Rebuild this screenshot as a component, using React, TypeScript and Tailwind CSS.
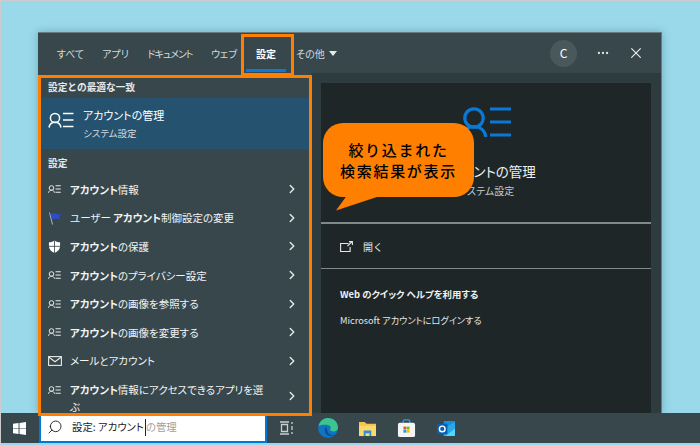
import { ReactNode } from 'react';
import { ChevronRight, MoreHorizontal, X, Search } from 'lucide-react';

const font = { fontFamily: '"Noto Sans CJK JP", "Noto Sans", sans-serif' };

function AccountIcon({ className, sw = 1.6 }: { className: string; sw?: number }) {
  return (
    <svg viewBox="0 0 26 16" fill="none" stroke="currentColor" strokeWidth={sw} className={className}>
      <circle cx="7" cy="6" r="4.600" />
      <path d="M1 15.500c.6-3.400 3-5.200 6-5.200s5.400 1.800 6 5.200" />
      <path d="M15 1.500h10.500M15 8h10.500M15 14.500h10.500" />
    </svg>
  );
}

function FlagIcon() {
  return (
    <svg viewBox="0 0 14 14" className="w-[14px] h-[14px]">
      <path d="M1.500 1.500 4.500 13.500" stroke="#aab4b8" strokeWidth="1" />
      <path d="M2 1.500c2 1.500 3 .5 5 1s3 1.500 6.500 .5L11 5.500l1.500 2c-3 .8-4.500-1-8.500 .8z" fill="#2f4bd0" />
    </svg>
  );
}

function ShieldIcon() {
  return (
    <svg viewBox="0 0 14 14" className="w-[13px] h-[13px]">
      <path d="M1 2.500C3.500 2.500 5.500 1.500 7 .5c1.500 1 3.500 2 6 2v4c0 3.500-2.500 6-6 7.500-3.500-1.500-6-4-6-7.500z" fill="#fff" />
      <path d="M7 .5v13.500M1 6.800h12" stroke="#38474c" strokeWidth="0.9" />
    </svg>
  );
}

function MailIcon() {
  return (
    <svg viewBox="0 0 14 10" fill="none" stroke="#e8eaea" strokeWidth="1.100" className="w-[14px] h-[10px]">
      <rect x="0.600" y="0.600" width="12.800" height="8.800" />
      <path d="M1 1.200 7 5.800l6-4.600" />
    </svg>
  );
}

function Row({ icon, children, tall }: { icon: ReactNode; children: ReactNode; tall?: boolean }) {
  return (
    <div className={`flex pl-[7px] pr-[10px] shrink-0 ${tall ? 'h-[38px] pt-[6px] items-start' : 'h-[28.6px] items-center'}`}>
      <div className={`w-[22px] flex items-center ${tall ? 'h-[17px]' : ''}`}>{icon}</div>
      <div className={`flex-1 text-[10.5px] text-[#f2f4f4] leading-[17px] [font-feature-settings:'palt'] ${tall ? 'pr-[14px]' : ''}`}>
        {children}
      </div>
      <ChevronRight size={14} strokeWidth={2.4} className={`text-[#e8eaea] ${tall ? 'mt-[1px] translate-y-[7px]' : ''}`} />
    </div>
  );
}

const accountIcon = <AccountIcon sw={2} className="w-[13px] h-[8px] text-[#e8eaea]" />;

function Tab({ label, active, className }: { label: string; active?: boolean; className: string }) {
  return (
    <div className={`relative h-full flex items-center justify-center whitespace-nowrap text-[10px] [font-feature-settings:'palt'] ${active ? 'font-bold text-white' : 'text-[#d5d9da]'} ${className}`}>
      {label}
      {active && <div className="absolute left-[-10px] right-[-10px] bottom-[1px] h-[3px] bg-[#0a78d4]" />}
    </div>
  );
}

export default function App() {
  return (
    <div style={font} className="relative w-[700px] h-[445px] overflow-hidden bg-[#99d9ea] border-t border-l border-[#cccccc] flex flex-col">
      <div className="ml-[37px] mt-[31px] w-[624px] h-[381px] flex flex-col bg-[#38474c] border-t border-r border-[#6b7a7e] shadow-[0_0_8px_rgba(40,80,90,0.35)]">
        {/* tabs */}
        <div className="h-[40px] flex items-center shrink-0">
          <Tab label="すべて" className="ml-[20px] w-[25px]" />
          <Tab label="アプリ" className="ml-[21px] w-[23px]" />
          <Tab label="ドキュメント" className="ml-[21px] w-[44px] tracking-[-1px]" />
          <Tab label="ウェブ" className="ml-[21px] w-[22px]" />
          <Tab label="設定" active className="ml-[21px] w-[20px]" />
          <Tab label="その他" className="ml-[21px] w-[27px]" />
          <div className="ml-[5px] w-0 h-0 border-x-[4px] border-x-transparent border-t-[5px] border-t-[#e8eaea]" />
          <div className="ml-auto w-[27px] h-[27px] rounded-full bg-[#4a585c] text-white text-[12px] flex items-center justify-center">C</div>
          <MoreHorizontal size={14} className="ml-[19px] text-[#e0e3e3]" />
          <X size={14} strokeWidth={1.5} className="ml-[19px] mr-[18px] text-[#eceeee] scale-125" />
        </div>

        <div className="flex-1 flex min-h-0">
          {/* results list */}
          <div className="w-[273px] flex flex-col pl-[3px] pr-[2px] shrink-0">
            <div className="h-[25px] shrink-0 pl-[7px] pt-[6px] text-[9.7px] font-bold text-[#e6e9e9] leading-[16px]">設定との最適な一致</div>
            <div className="h-[51px] shrink-0 bg-[#25526f] flex items-start pl-[7px]">
              <AccountIcon sw={1.5} className="w-[26px] h-[16px] mt-[14px] text-white" />
              <div className="ml-[9px] [font-feature-settings:'palt']">
                <div className="mt-[8px] text-[11px] leading-[18px] text-white">アカウントの管理</div>
                <div className="mt-[1px] text-[9.5px] leading-[16px] text-[#d4dadd]">システム設定</div>
              </div>
            </div>
            <div className="h-[26px] shrink-0 pl-[7px] pt-[6px] text-[9.7px] font-bold text-[#e6e9e9] leading-[16px]">設定</div>
            <Row icon={accountIcon}><b>アカウント</b>情報</Row>
            <Row icon={<FlagIcon />}>ユーザー <b>アカウント</b>制御設定の変更</Row>
            <Row icon={<ShieldIcon />}><b>アカウント</b>の保護</Row>
            <Row icon={accountIcon}><b>アカウント</b>のプライバシー設定</Row>
            <Row icon={accountIcon}><b>アカウント</b>の画像を参照する</Row>
            <Row icon={accountIcon}><b>アカウント</b>の画像を変更する</Row>
            <Row icon={<MailIcon />}>メールとアカウント</Row>
            <Row tall icon={accountIcon}><b>アカウント</b>情報にアクセスできるアプリを選ぶ</Row>
          </div>

          {/* preview */}
          <div className="flex-1 bg-[#2e3b3f] pt-[10px] px-[10px]">
            <div className="h-full bg-[#1f2628] flex flex-col">
              <div className="h-[139px] flex flex-col items-center shrink-0">
                <AccountIcon className="w-[52px] h-[32px] mt-[23px] text-[#0a78d4]" />
                <div className="mt-[23px] text-[13.5px] leading-[20px] text-[#eef0f0] [font-feature-settings:'palt']">アカウントの管理</div>
                <div className="mt-[2px] text-[10px] leading-[16px] text-[#c6caca] [font-feature-settings:'palt']">システム設定</div>
              </div>
              <div className="h-[2px] bg-[#7f8a8b]" />
              <div className="h-[44px] flex items-center pl-[19px]">
                <svg viewBox="0 0 13 11" fill="none" stroke="#e4e6e6" strokeWidth="1.100" className="w-[13px] h-[11px]">
                  <path d="M8.500 2.500H.6v8h9.500V6M7.500 5l4.500-4.400M9 .6h3.400V4" />
                </svg>
                <span className="ml-[10px] text-[10px] text-[#e4e6e6]">開く</span>
              </div>
              <div className="h-[1px] bg-[#7f8a8b]" />
              <div className="pl-[19px] pt-[17px] text-[9.4px] leading-[16px] font-bold text-[#f0f2f2] [font-feature-settings:'palt']">Web のクイック ヘルプを利用する</div>
              <div className="pl-[19px] pt-[10px] text-[9.2px] leading-[17px] text-[#e4e6e6] [font-feature-settings:'palt']">Microsoft アカウントにログインする</div>
            </div>
          </div>
        </div>
      </div>

      {/* taskbar */}
      <div className="ml-[-1px] h-[30px] w-[700px] bg-[#37474b] flex items-center shrink-0">
        <svg viewBox="0 0 14 14" className="ml-[13px] w-[13px] h-[13px]">
          <path d="M0 2 6 1.100V6.600H0zM7 1 14 0V6.600H7zM0 7.400H6V12.900L0 12zM7 7.400H14V14L7 13z" fill="#fff" />
        </svg>
        <div className="ml-[13px] w-[228px] h-[30px] bg-white border-2 border-[#0078d7] border-t-0 flex items-center">
          <Search size={16} strokeWidth={1.4} className="ml-[6px] -scale-x-100 text-[#222]" />
          <span className="ml-[9px] text-[10.4px] text-[#222] [font-feature-settings:'palt']">設定: アカウント</span>
          <span className="ml-[1px] w-px h-[17px] bg-[#222]" />
          <span className="text-[10.4px] text-[#a0a0a0] [font-feature-settings:'palt']">の管理</span>
        </div>
        <svg viewBox="0 0 13 14" fill="none" stroke="#c9cecf" strokeWidth="1.300" className="ml-[13px] w-[13px] h-[14px]">
          <path d="M0 1h9M0 13h9M1.500 3.500h6v7h-6zM12 1v2M12 5v4M12 11v2" />
        </svg>
        <svg viewBox="0 0 20 20" className="ml-[25px] w-[20px] h-[20px]">
          <circle cx="10" cy="10" r="10" fill="#1173c4" />
          <path d="M0.500 8C2 2.500 6 0 10 0c5.500 0 10 4 10 9.500 0 2.500-2 4-4.500 4-2 0-3.500-.8-3.500-2 1.500-1 1-4-2.500-4.500C6 6.500 3 7 .5 8z" fill="#3cc48d" />
          <path d="M8 9c-2 2-1.500 6.500 2 8.500 2 1 5 .5 7-1-3 1-5.500.5-7-2-1-2-1-3.500-2-5.500z" fill="#0c4f8f" />
        </svg>
        <svg viewBox="0 0 20 18" className="ml-[20px] w-[19px] h-[17px]">
          <path d="M1 2h6l2 2h10v13H1z" fill="#f3c44e" />
          <path d="M1 6h18v11H1z" fill="#fbd96b" />
          <path d="M6 11h8v6h-2v-3H8v3H6z" fill="#2f8fd8" />
        </svg>
        <svg viewBox="0 0 20 20" className="ml-[20px] w-[19px] h-[19px]">
          <path d="M6.500 5V2.500Q6.500 1 8 1h4q1.500 0 1.500 1.500V5" fill="none" stroke="#2ba3d8" strokeWidth="1.300" />
          <rect x="1" y="4" width="18" height="15" rx="2" fill="#f5f5f5" />
          <rect x="6.800" y="8" width="3" height="3" fill="#f25022" />
          <rect x="10.200" y="8" width="3" height="3" fill="#7fba00" />
          <rect x="6.800" y="11.400" width="3" height="3" fill="#00a4ef" />
          <rect x="10.200" y="11.400" width="3" height="3" fill="#ffb900" />
        </svg>
        <svg viewBox="0 0 20 18" className="ml-[21px] w-[19px] h-[17px]">
          <path d="M7 1h11q1 0 1 1v14q0 1-1 1H7z" fill="#1490df" />
          <path d="M7 9 19 2v8l-8 7H7z" fill="#28a8ea" />
          <path d="M19 9v7q0 1-1 1H9z" fill="#50d9ff" />
          <rect x="0" y="4" width="11" height="11" rx="1" fill="#0a5fb0" />
          <circle cx="5.500" cy="9.500" r="3" fill="none" stroke="#fff" strokeWidth="1.500" />
        </svg>
      </div>

      {/* annotation overlays */}
      <div className="absolute left-[240px] top-[33px] w-[53px] h-[42px] border-[3px] border-[#ff8000]" />
      <div className="absolute left-[37px] top-[74px] w-[274px] h-[341px] border-[3px] border-[#ff8000]" />
      <svg viewBox="0 0 60 20" className="absolute left-[334px] top-[191px] w-[60px] h-[20px]">
        <path d="M1 18.500 13 2h38z" fill="#ff8000" />
      </svg>
      <div className="absolute left-[322px] top-[122px] w-[151px] h-[74px] rounded-[20px] bg-[#ff8000] flex flex-col items-center justify-center text-[15px] leading-[21px] font-medium text-black tracking-[1.7px]">
        <div>絞り込まれた</div>
        <div>検索結果が表示</div>
      </div>
    </div>
  );
}
